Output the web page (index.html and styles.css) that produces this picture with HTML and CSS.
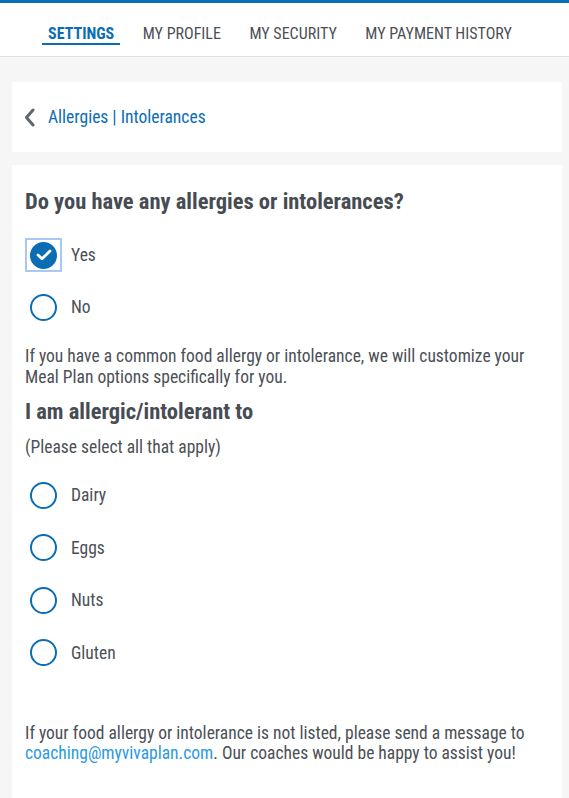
FILE: index.html
```html
<!DOCTYPE html>
<html lang="en">
<head>
<meta charset="utf-8">
<title>Allergies | Intolerances</title>
<link rel="stylesheet" href="styles.css">
</head>
<body>
<header class="topbar">
  <nav class="tabs">
    <a class="tab active" href="#">SETTINGS</a>
    <a class="tab" href="#">MY PROFILE</a>
    <a class="tab" href="#">MY SECURITY</a>
    <a class="tab" href="#">MY PAYMENT HISTORY</a>
  </nav>
</header>
<main class="content">
  <section class="card crumb">
    <svg class="chev" width="11" height="19" viewBox="0 0 11 19"><path d="M9 2 L2.5 9.5 L9 17" fill="none" stroke="#5f6670" stroke-width="3" stroke-linecap="round" stroke-linejoin="round"/></svg>
    <span class="crumb-text">Allergies | Intolerances</span>
  </section>
  <section class="card form">
    <h2 class="q">Do you have any allergies or intolerances?</h2>
    <div class="opts">
      <label class="opt">
        <span class="focus"><span class="radio checked"><svg width="16" height="12" viewBox="0 0 16 12"><path d="M2 6 L6 9.8 L14 2" fill="none" stroke="#fff" stroke-width="2.8" stroke-linecap="round" stroke-linejoin="round"/></svg></span></span>
        <span class="opt-text">Yes</span>
      </label>
      <label class="opt">
        <span class="focus plain"><span class="radio"></span></span>
        <span class="opt-text">No</span>
      </label>
    </div>
    <p class="note">If you have a common food allergy or intolerance, we will customize your Meal Plan options specifically for you.</p>
    <h2 class="q2">I am allergic/intolerant to</h2>
    <p class="hint">(Please select all that apply)</p>
    <div class="opts list">
      <label class="opt"><span class="focus plain"><span class="radio"></span></span><span class="opt-text">Dairy</span></label>
      <label class="opt"><span class="focus plain"><span class="radio"></span></span><span class="opt-text">Eggs</span></label>
      <label class="opt"><span class="focus plain"><span class="radio"></span></span><span class="opt-text">Nuts</span></label>
      <label class="opt"><span class="focus plain"><span class="radio"></span></span><span class="opt-text">Gluten</span></label>
    </div>
    <p class="foot">If your food allergy or intolerance is not listed, please send a message to <a class="mail" href="#">coaching@myvivaplan.com</a>. Our coaches would be happy to assist you!</p>
  </section>
</main>
</body>
</html>
```
FILE: styles.css
```css
html, body {
  margin: 0;
  padding: 0;
}
body {
  background: #f6f6f6;
  font-family: Roboto, "Liberation Sans", sans-serif;
  font-stretch: condensed;
  color: #4b5056;
}
.topbar {
  background: #fff;
  border-top: 3px solid #0b6db4;
  border-bottom: 1px solid #e1e1e1;
  height: 57px;
  box-sizing: border-box;
}
.tabs {
  display: flex;
  gap: 16.5px;
  padding: 22px 0 0 42px;
}
.tab {
  font-size: 16px;
  line-height: 18px;
  color: #4b5056;
  text-decoration: none;
  padding: 0 6px;
  border-bottom: 2px solid transparent;
}
.tab.active {
  color: #0b6db4;
  font-weight: 700;
  border-bottom-color: #0b6db4;
}
.content {
  padding: 25px 7px 0 12px;
  display: flex;
  flex-direction: column;
  gap: 13px;
}
.card {
  background: #fff;
}
.crumb {
  height: 70px;
  display: flex;
  align-items: center;
  padding-left: 12px;
  gap: 13px;
}
.crumb-text {
  color: #0b6db4;
  font-size: 17.5px;
}
.form {
  padding: 20px 13px 60px;
}
.q {
  margin: 0;
  font-size: 22.5px;
  line-height: 32px;
  font-weight: 700;
  color: #474c53;
}
.opts {
  display: flex;
  flex-direction: column;
  gap: 16.4px;
  margin-top: 20px;
}
.opt {
  display: flex;
  align-items: center;
  gap: 9px;
  height: 36px;
}
.focus {
  width: 37px;
  height: 34px;
  box-sizing: border-box;
  border: 2px solid #a9c9f5;
  display: flex;
  align-items: center;
  justify-content: center;
}
.focus.plain {
  border-color: transparent;
}
.radio {
  width: 27px;
  height: 27px;
  box-sizing: border-box;
  border-radius: 50%;
  border: 2px solid #0b6db4;
  display: flex;
  align-items: center;
  justify-content: center;
}
.radio.checked {
  background: #0b6db4;
}
.opt-text {
  font-size: 17.5px;
}
.note {
  margin: 21px 0 0;
  font-size: 17.5px;
  line-height: 21px;
}
.q2 {
  margin: 8px 0 0;
  font-size: 22.5px;
  line-height: 30px;
  font-weight: 700;
  color: #474c53;
}
.hint {
  margin: 10px 0 0;
  font-size: 17.5px;
  line-height: 22px;
}
.list {
  margin-top: 19px;
}
.foot {
  margin: 52px 0 0;
  font-size: 17.5px;
  line-height: 20px;
}
.mail {
  color: #2b9be0;
  text-decoration: none;
}
```
